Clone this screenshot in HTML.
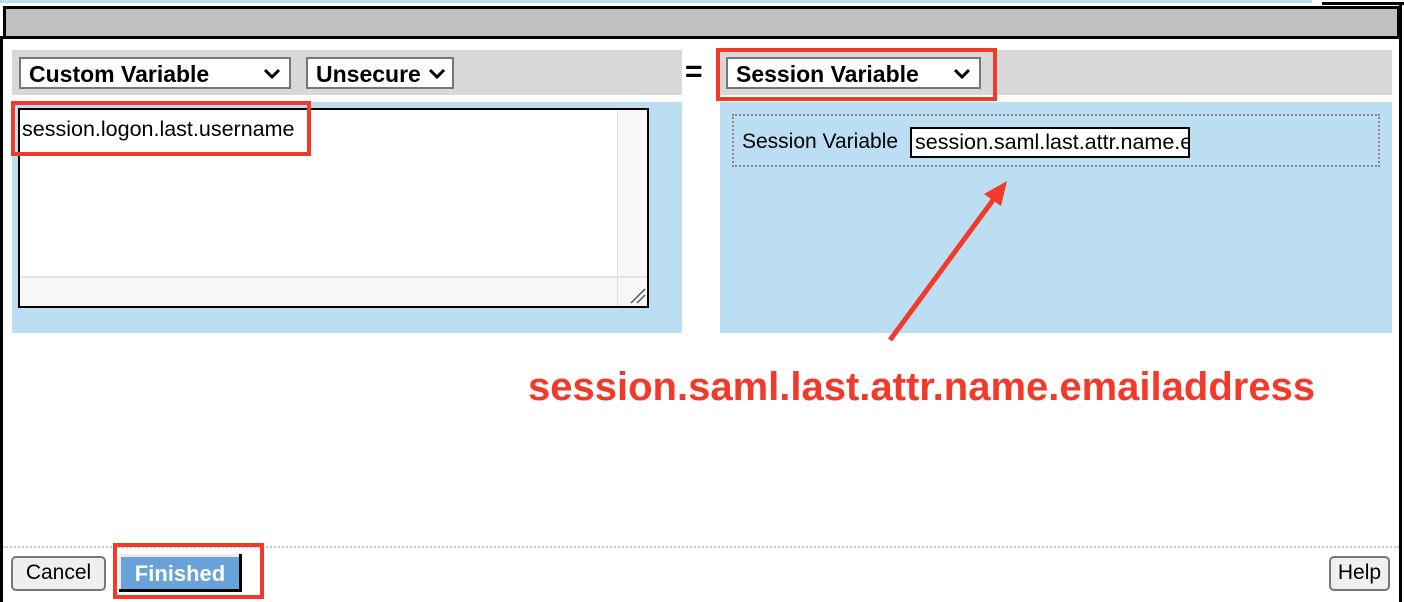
<!DOCTYPE html>
<html><head><style>
*{margin:0;padding:0;box-sizing:border-box}
body{width:1404px;height:602px;position:relative;background:#fff;font-family:"Liberation Sans",sans-serif;overflow:hidden}
.a{position:absolute}
.sel{position:absolute;background:#fff;border:2px solid #777;font-weight:bold;font-size:23px;padding:2px 8px;line-height:26px;white-space:nowrap}
.sel svg{position:absolute;right:8px;top:9px}
.btn{position:absolute;border:2px solid #777;border-radius:5px;background:#efefef;font-size:21px;text-align:center;line-height:30px}
</style></head><body>
<div class="a" style="left:0;top:0;width:1312px;height:3px;background:#bcdcf0"></div>
<div class="a" style="left:1322px;top:2px;width:82px;height:3px;background:#000"></div>
<div class="a" style="left:0;top:36px;width:3px;height:566px;background:#000"></div>
<div class="a" style="left:1399px;top:2px;width:3px;height:600px;background:#000"></div>
<div class="a" style="left:3px;top:6px;width:1397px;height:33px;background:#c0c0c0;border:3px solid #000"></div>

<div class="a" style="left:12px;top:50px;width:670px;height:45px;background:#d8d8d8"></div>
<div class="a" style="left:720px;top:50px;width:672px;height:45px;background:#d8d8d8"></div>
<div class="a" style="left:12px;top:102px;width:670px;height:231px;background:#bbdef3"></div>
<div class="a" style="left:720px;top:102px;width:672px;height:231px;background:#bbdef3"></div>

<div class="sel" style="left:19px;top:57px;width:272px;height:32px">Custom Variable<svg width="18" height="12" viewBox="0 0 18 12"><path d="M2 2 L9 9 L16 2" stroke="#000" stroke-width="3" fill="none"/></svg></div>
<div class="sel" style="left:306px;top:57px;width:148px;height:32px">Unsecure<svg width="18" height="12" viewBox="0 0 18 12" style="right:6px"><path d="M2 2 L9 9 L16 2" stroke="#000" stroke-width="3" fill="none"/></svg></div>
<div class="a" style="left:685px;top:57px;font-weight:bold;font-size:30px;line-height:30px">=</div>
<div class="sel" style="left:726px;top:57px;width:255px;height:32px">Session Variable<svg width="18" height="12" viewBox="0 0 18 12"><path d="M2 2 L9 9 L16 2" stroke="#000" stroke-width="3" fill="none"/></svg></div>
<div class="a" style="left:716px;top:48px;width:281px;height:53px;border:4px solid #f23a2a"></div>

<div class="a" style="left:18px;top:108px;width:631px;height:200px;background:#fff;border:2px solid #000">
 <div class="a" style="left:597px;top:0;width:30px;height:196px;background:#f7f7f7;border-left:1px solid #e2e2e2"></div>
 <div class="a" style="left:0;top:166px;width:627px;height:30px;background:#f7f7f7;border-top:2px solid #e2e2e2"></div>
 <div class="a" style="left:597px;top:166px;width:1px;height:30px;background:#e2e2e2"></div>
 <svg class="a" style="left:610px;top:178px" width="16" height="16"><path d="M1 15 L15 1 M7 15 L15 7" stroke="#555" stroke-width="1.5"/></svg>
 <div class="a" style="left:2px;top:7px;font-size:21.5px">session.logon.last.username</div>
</div>
<div class="a" style="left:11px;top:101px;width:300px;height:55px;border:4px solid #f23a2a"></div>

<div class="a" style="left:732px;top:114px;width:648px;height:53px;border:2px dotted #888"></div>
<div class="a" style="left:742px;top:130px;font-size:21px">Session Variable</div>
<div class="a" style="left:910px;top:127px;width:280px;height:31px;background:#fff;border:2px solid #000;font-size:21.5px;line-height:27px;padding-left:3px;overflow:hidden;white-space:nowrap">session.saml.last.attr.name.emailaddress</div>

<svg class="a" style="left:0;top:0" width="1404" height="602"><path d="M890 340 L996 196" stroke="#f23a2a" stroke-width="5"/><path d="M1007 181 L984 194 L1001 206 Z" fill="#f23a2a"/></svg>
<div class="a" style="left:528px;top:364px;font-size:40px;font-weight:bold;color:#f23a2a;line-height:46px;white-space:nowrap">session.saml.last.attr.name.emailaddress</div>

<div class="a" style="left:3px;top:546px;width:1396px;border-top:2px dotted #c8c8c8"></div>
<div class="btn" style="left:11px;top:556px;width:95px;height:35px">Cancel</div>
<div class="a" style="left:119px;top:554px;width:123px;height:38px;background:#000"></div>
<div class="a" style="left:119px;top:554px;width:120px;height:35px;background:#ececec"></div>
<div class="a" style="left:121px;top:557px;width:118px;height:32px;background:#67a2d8;color:#fff;font-weight:bold;font-size:22px;text-align:center;line-height:33px">Finished</div>
<div class="a" style="left:113px;top:543px;width:151px;height:56px;border:4px solid #f23a2a"></div>
<div class="btn" style="left:1329px;top:556px;width:61px;height:35px">Help</div>
</body></html>
